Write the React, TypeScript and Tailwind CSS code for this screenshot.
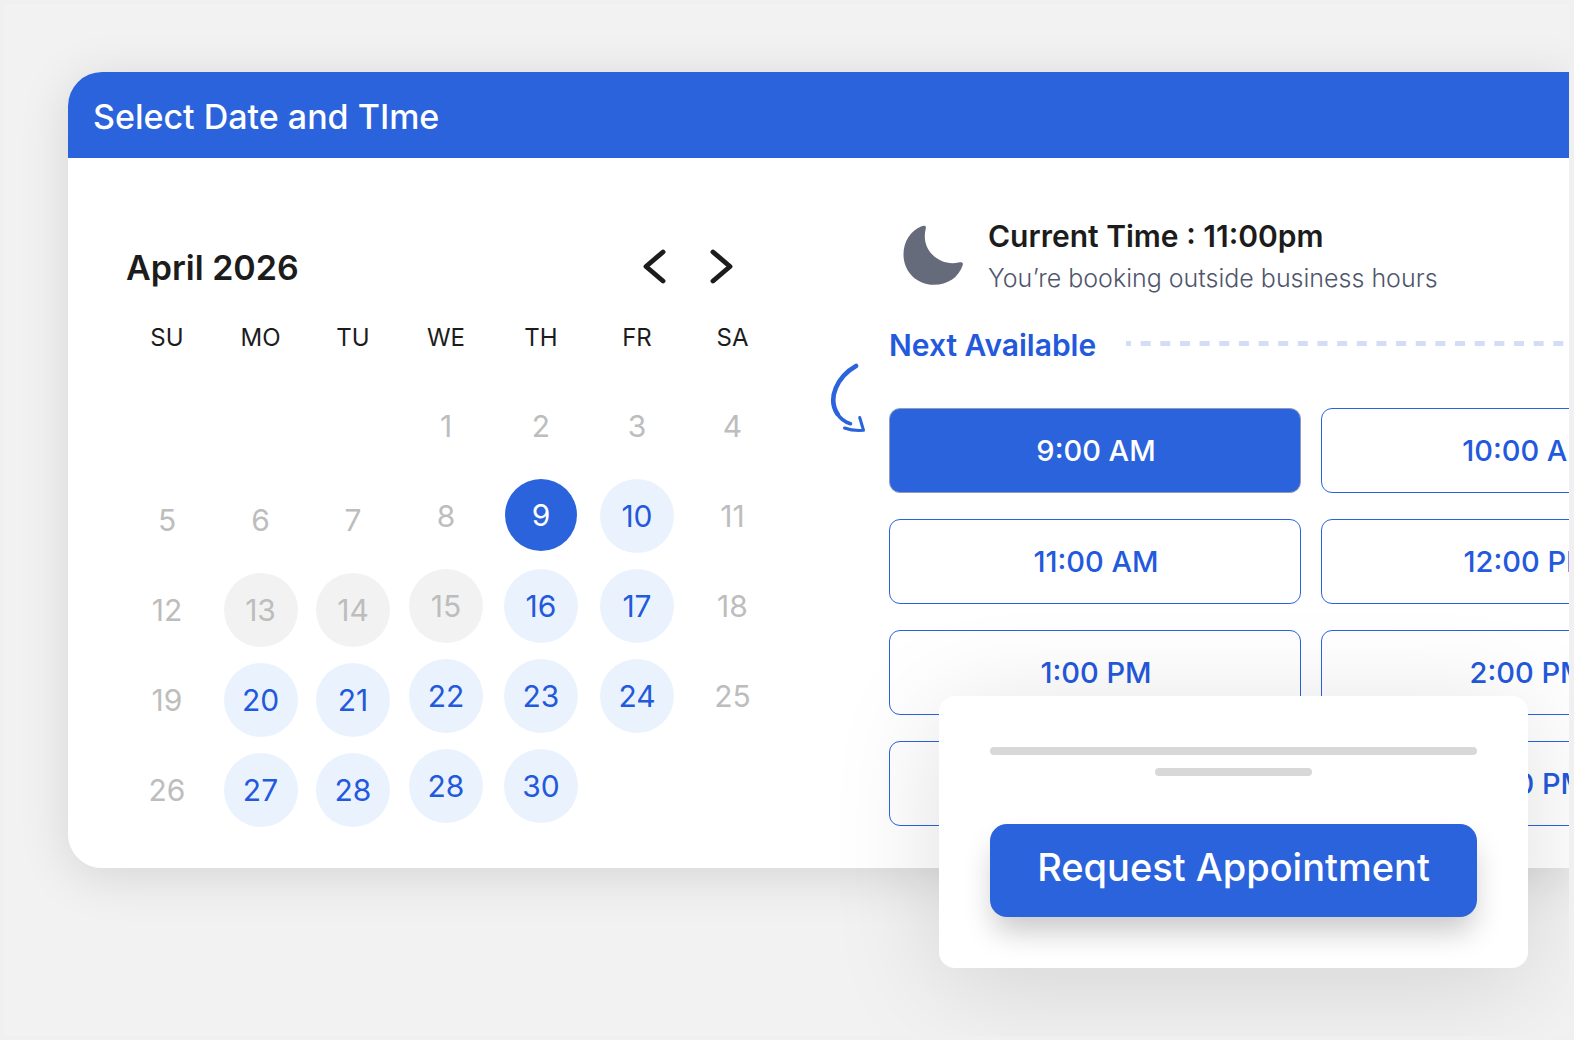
type DayState = 'muted' | 'disabled' | 'open' | 'selected';

interface Day {
  label: string;
  state: DayState;
}

interface SlotProps {
  time: string;
  selected?: boolean;
}

const WEEKDAYS = ['SU', 'MO', 'TU', 'WE', 'TH', 'FR', 'SA'];

const muted = (label: string): Day => ({ label, state: 'muted' });
const disabled = (label: string): Day => ({ label, state: 'disabled' });
const open = (label: string): Day => ({ label, state: 'open' });

const WEEKS: (Day | null)[][] = [
  [null, null, null, muted('1'), muted('2'), muted('3'), muted('4')],
  [
    muted('5'),
    muted('6'),
    muted('7'),
    muted('8'),
    { label: '9', state: 'selected' },
    open('10'),
    muted('11')
  ],
  [
    muted('12'),
    disabled('13'),
    disabled('14'),
    disabled('15'),
    open('16'),
    open('17'),
    muted('18')
  ],
  [
    muted('19'),
    open('20'),
    open('21'),
    open('22'),
    open('23'),
    open('24'),
    muted('25')
  ],
  [muted('26'), open('27'), open('28'), open('28'), open('30'), null, null]
];

const SLOTS = [
  '9:00 AM',
  '10:00 AM',
  '11:00 AM',
  '12:00 PM',
  '1:00 PM',
  '2:00 PM',
  '3:00 PM',
  '4:00 PM'
];

const dayStyles: Record<DayState, string> = {
  muted: 'size-[74px] text-[#bdbdbd]',
  disabled: 'size-[74px] bg-[#f2f2f2] text-[#bdbdbd]',
  open: 'size-[74px] bg-[#eaf3fd] text-[#2359dc]',
  selected: 'size-[72px] bg-[#2b63dd] text-white'
};

const DayButton = ({ label, state }: Day) => (
  <button
    type="button"
    disabled={state === 'muted' || state === 'disabled'}
    className={`mx-auto flex items-center justify-center rounded-full text-[30px] leading-none ${dayStyles[state]}`}
  >
    {label}
  </button>
);

const Slot = ({ time, selected }: SlotProps) => (
  <button
    type="button"
    className={`h-[85px] rounded-[11px] border pl-0.5 text-[29px] font-medium ${
      selected
        ? 'border-[#8f9bb8] bg-[#2b63dd] text-white'
        : 'border-[#2b63dd] text-[#2359dc]'
    }`}
  >
    {time}
  </button>
);

const Chevron = ({ d }: { d: string }) => (
  <svg width="24" height="36" viewBox="0 0 24 36" fill="none" aria-hidden="true">
    <path
      d={d}
      stroke="#1c1c1c"
      strokeWidth="4.9"
      strokeLinecap="round"
      strokeLinejoin="round"
    />
  </svg>
);

const Calendar = () => (
  <section className="w-[660px] shrink-0 pt-[89px]">
    <div className="flex h-10 items-center justify-between pr-[46px] pl-1.5">
      <h2 className="text-[34px] font-semibold text-[#1c1c1c]">April 2026</h2>
      <div className="flex gap-[44px]">
        <button type="button" aria-label="Previous month">
          <Chevron d="M21 3 4 17.5 21 32" />
        </button>
        <button type="button" aria-label="Next month">
          <Chevron d="M3 3 20 17.5 3 32" />
        </button>
      </div>
    </div>
    <table className="mt-[31px] w-full table-fixed">
      <colgroup>
        <col className="w-[94px]" />
        <col className="w-[93px]" />
        <col className="w-[92px]" />
        <col className="w-[94px]" />
        <col className="w-[96px]" />
        <col className="w-[96px]" />
        <col className="w-[95px]" />
      </colgroup>
      <thead>
        <tr className="h-[71px]">
          {WEEKDAYS.map((day) => (
            <th
              key={day}
              className="p-0 align-top text-2xl leading-10 font-normal text-[#1c1c1c]"
            >
              {day}
            </th>
          ))}
        </tr>
      </thead>
      <tbody>
        {WEEKS.map((week, row) => (
          <tr key={row} className="h-[90px]">
            {week.map((day, col) => (
              <td
                key={col}
                className={`px-0 pb-0 align-top ${col < 3 ? 'pt-1' : 'pt-0'}`}
              >
                {day && <DayButton {...day} />}
              </td>
            ))}
          </tr>
        ))}
      </tbody>
    </table>
  </section>
);

const Availability = () => (
  <section className="relative ml-[109px] flex-1 pt-[57px]">
    <div className="flex pl-3">
      <svg
        className="mt-2"
        width="64"
        height="64"
        viewBox="0 0 64 64"
        aria-hidden="true"
      >
        <path
          d="M20.500 3.200C23.500 2 25.500 3 24.800 5.500C22.500 14.500 24 24 31.500 31.800C38.500 38.800 48 41.500 57.500 39.500C61 38.700 62.500 39.700 61.600 42.500C57.500 54.500 46.500 61.800 33 61.800C16 61.800 2.500 49 2.500 31.500C2.500 18.500 9.500 7.500 20.500 3.200Z"
          fill="#666b7b"
        />
      </svg>
      <div className="ml-[23px] whitespace-nowrap">
        <p className="text-[30px] leading-[42px] font-semibold text-[#1c1c1c]">
          Current Time : 11:00pm
        </p>
        <p className="text-[25px] leading-[42px] font-light text-[#4f566b]">
          You’re booking outside business hours
        </p>
      </div>
    </div>
    <div className="mt-6 flex h-11 items-center">
      <h3 className="text-[30px] font-semibold whitespace-nowrap text-[#2359dc]">
        Next Available
      </h3>
      <svg
        className="mr-1 mb-[3px] ml-[30px] h-[5px] min-w-0 flex-1"
        aria-hidden="true"
      >
        <line
          x1="0"
          y1="2.5"
          x2="100%"
          y2="2.5"
          stroke="#d3ddf6"
          strokeWidth="5"
          strokeDasharray="10 9.65"
          strokeDashoffset="5"
        />
      </svg>
    </div>
    <svg
      className="absolute top-[204px] -left-[60px]"
      width="40"
      height="74"
      viewBox="0 0 40 74"
      fill="none"
      stroke="#2b63dd"
      strokeLinecap="round"
      strokeLinejoin="round"
      aria-hidden="true"
    >
      <path d="M27 4C8.500 14.500-2 36 8.500 52" strokeWidth="4.600" />
      <path d="M8.500 52C11.500 57 16 60 21.500 61.700" strokeWidth="3.600" />
      <path d="M15.500 66C22 68.500 28 68.700 34.500 68.300L30.700 55.500" strokeWidth="3" />
    </svg>
    <div className="mt-[41px] grid grid-cols-[412px_412px] gap-x-5 gap-y-[26px]">
      {SLOTS.map((time, i) => (
        <Slot key={time} time={time} selected={i === 0} />
      ))}
    </div>
  </section>
);

const RequestPanel = () => (
  <div className="absolute right-[41px] bottom-[-100px] flex w-[589px] flex-col items-center rounded-[16px] bg-white px-[51px] pt-[51px] pb-[51px] shadow-[0_16px_110px_rgba(0,0,0,0.13)]">
    <div className="h-2 w-full rounded-full bg-[#d8d8d8]" />
    <div className="mt-[13px] h-2 w-[157px] rounded-full bg-[#d8d8d8]" />
    <button
      type="button"
      className="mt-12 h-[93px] w-full rounded-[17px] bg-[#2b63dd] pb-1.5 text-[38px] font-medium whitespace-nowrap text-white shadow-[0_18px_30px_-4px_rgba(0,0,0,0.22)]"
    >
      Request Appointment
    </button>
  </div>
);

const App = () => {
  return (
    <div className="flex min-h-screen bg-[#f0f0f0] py-1 pr-[5px] pl-1 font-['Inter',sans-serif]">
      <main className="min-w-0 flex-1 overflow-hidden bg-[#f2f2f2] pt-[68px] pl-16">
        <div className="relative">
          <div className="rounded-l-[34px] shadow-[0_8px_52px_rgba(0,0,0,0.12)]">
            <div className="overflow-hidden rounded-l-[34px] bg-white">
              <header className="flex h-[86px] items-center bg-[#2b63dd] px-[25px] pt-1">
                <h1 className="text-[34px] leading-none font-medium text-white">
                  Select Date and TIme
                </h1>
              </header>
              <div className="flex h-[710px] pl-[52px]">
                <Calendar />
                <Availability />
              </div>
            </div>
          </div>
          <RequestPanel />
        </div>
      </main>
    </div>
  );
};

export default App;
